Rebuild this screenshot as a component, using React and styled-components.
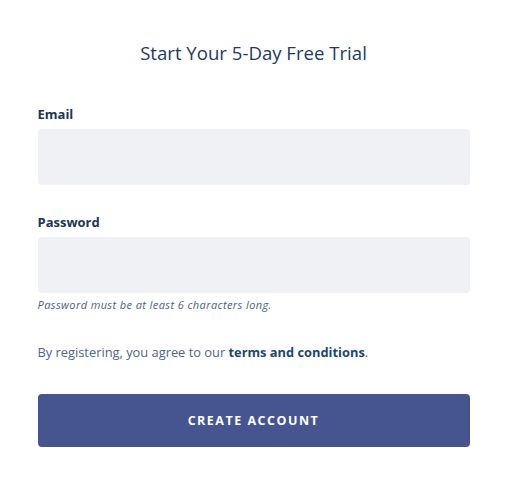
import styled, { createGlobalStyle } from "styled-components";

const GlobalStyle = createGlobalStyle`
  body {
    margin: 0;
    background: #ffffff;
    font-family: "Open Sans", "Noto Sans", Arial, sans-serif;
  }
`;

const Page = styled.div`
  width: 432px;
  margin: 0 auto;
  padding: 40px 0 0;
  box-sizing: border-box;
`;

const Title = styled.h1`
  margin: 0 0 40px;
  text-align: center;
  font-size: 18.6px;
  font-weight: 400;
  line-height: 26px;
  color: #1f3a5f;
`;

const Field = styled.div`
  display: flex;
  flex-direction: column;
  margin-bottom: ${(props) => props.$gap || "0"};
`;

const Label = styled.label`
  font-size: 13px;
  font-weight: 700;
  line-height: 17px;
  color: #1c3555;
  margin-bottom: 6px;
`;

const Input = styled.input`
  width: 100%;
  height: 56px;
  border: none;
  border-radius: 4px;
  background-color: #f0f1f5;
  box-sizing: border-box;
  padding: 0 14px;
  font-size: 14px;
  outline: none;
`;

const Hint = styled.div`
  margin-top: 5px;
  font-size: 11px;
  font-style: italic;
  letter-spacing: 0.4px;
  line-height: 14px;
  color: #4b6282;
`;

const Agree = styled.p`
  margin: 31px 0 33px;
  font-size: 12.85px;
  line-height: 18px;
  color: #4d6686;
`;

const Terms = styled.a`
  font-weight: 700;
  color: #1d4771;
  text-decoration: none;
  cursor: pointer;
`;

const Button = styled.button`
  display: block;
  width: 100%;
  height: 53px;
  border: none;
  border-radius: 4px;
  background-color: #46548f;
  color: #ffffff;
  font-family: inherit;
  font-size: 12.5px;
  font-weight: 700;
  letter-spacing: 1.5px;
  text-transform: uppercase;
  cursor: pointer;
`;

export default function App() {
  return (
    <>
      <GlobalStyle />
      <Page>
        <Title>Start Your 5-Day Free Trial</Title>
        <Field $gap="29px">
          <Label>Email</Label>
          <Input type="email" />
        </Field>
        <Field>
          <Label>Password</Label>
          <Input type="password" />
          <Hint>Password must be at least 6 characters long.</Hint>
        </Field>
        <Agree>
          By registering, you agree to our <Terms>terms and conditions</Terms>.
        </Agree>
        <Button>Create Account</Button>
      </Page>
    </>
  );
}
